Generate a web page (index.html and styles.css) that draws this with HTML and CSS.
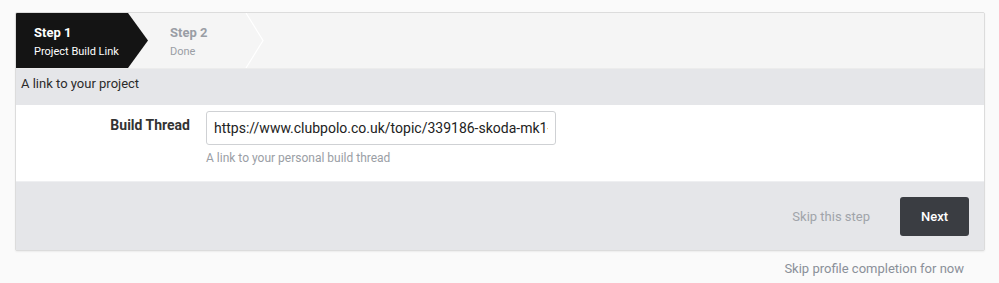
FILE: index.html
```html
<!DOCTYPE html>
<html>
<head>
<meta charset="utf-8">
<link rel="stylesheet" href="styles.css">
</head>
<body>
<div class="page">
  <div class="card">
    <div class="steps">
      <div class="step active">
        <div class="step-title">Step 1</div>
        <div class="step-sub">Project Build Link</div>
      </div>
      <div class="step">
        <div class="step-title">Step 2</div>
        <div class="step-sub">Done</div>
        <svg class="chev" width="20" height="55" viewBox="0 0 20 55"><polyline points="1,0 18,27.5 1,55" fill="none" stroke="#ffffff" stroke-width="1.2"/></svg>
      </div>
    </div>
    <div class="section-head">A link to your project</div>
    <div class="section-body">
      <div class="row">
        <label class="label">Build Thread</label>
        <div class="field">
          <input class="input" type="text" value="https://www.clubpolo.co.uk/topic/339186-skoda-mk1-fabia-vrs">
          <div class="hint">A link to your personal build thread</div>
        </div>
      </div>
    </div>
    <div class="footer">
      <a class="skip">Skip this step</a>
      <button class="btn">Next</button>
    </div>
  </div>
  <div class="below"><a class="skip-all">Skip profile completion for now</a></div>
</div>
</body>
</html>
```
FILE: styles.css
```css
html, body {
  margin: 0;
  padding: 0;
  background: #fafafa;
  font-family: Roboto, "Liberation Sans", Arial, sans-serif;
  color: #2b2b2b;
}
.page {
  padding: 12px 14px 0 15px;
}
.card {
  border: 1px solid #dcdcdc;
  border-radius: 2px;
  background: #f5f5f5;
  box-shadow: 0 1px 2px rgba(0,0,0,0.06);
  overflow: hidden;
}
.steps {
  display: flex;
  height: 55px;
  background: #f5f5f5;
  border-bottom: 1px solid #ececec;
}
.step {
  position: relative;
  display: flex;
  flex-direction: column;
  justify-content: center;
  padding-left: 22px;
  padding-top: 4px;
  width: 95px;
  color: #9a9ea5;
}
.step.active {
  background: #141414;
  color: #fff;
  padding-left: 18px;
  width: 94px;
}
.step.active::after {
  content: "";
  position: absolute;
  right: -20px;
  top: 0;
  width: 20px;
  height: 55px;
  background: #141414;
  clip-path: polygon(0 0, 100% 50%, 0 100%);
}
.step + .step { padding-left: 42px; }
.chev {
  position: absolute;
  right: 0;
  top: 0;
}
.step-title {
  font-size: 13px;
  font-weight: 700;
  line-height: 16px;
}
.step-sub {
  font-size: 11px;
  line-height: 16px;
  margin-top: 3px;
}
.section-head {
  background: #e5e6e9;
  font-size: 13px;
  line-height: 16px;
  padding: 7px 5px 13px;
  color: #2b2b2b;
}
.section-body {
  background: #fff;
  padding: 6px 0 15px;
}
.row {
  display: flex;
  align-items: flex-start;
}
.label {
  width: 174px;
  text-align: right;
  font-weight: 700;
  font-size: 14px;
  line-height: 16px;
  padding-top: 6px;
  margin-right: 16px;
  color: #333;
}
.field {
  display: flex;
  flex-direction: column;
}
.input {
  width: 350px;
  height: 34px;
  box-sizing: border-box;
  border: 1px solid #cfd1d4;
  border-radius: 3px;
  padding: 0 7px;
  font-family: inherit;
  font-size: 14px;
  color: #222;
  background: #fff;
  outline: none;
}
.hint {
  font-size: 12px;
  color: #9a9ea5;
  margin-top: 5px;
  line-height: 16px;
}
.footer {
  background: #e5e6e9;
  display: flex;
  justify-content: flex-end;
  align-items: center;
  height: 68px;
  padding-right: 15px;
  border-top: 1px solid #eeeff1;
}
.skip {
  font-size: 13px;
  color: #a0a4a9;
  margin-right: 30px;
}
.btn {
  background: #3a3d42;
  color: #fff;
  border: none;
  border-radius: 3px;
  font-family: inherit;
  font-size: 13px;
  font-weight: 500;
  width: 69px;
  height: 39px;
}
.below {
  display: flex;
  justify-content: flex-end;
  padding: 10px 21px 0 0;
}
.skip-all {
  font-size: 13px;
  color: #8a9099;
}
```
